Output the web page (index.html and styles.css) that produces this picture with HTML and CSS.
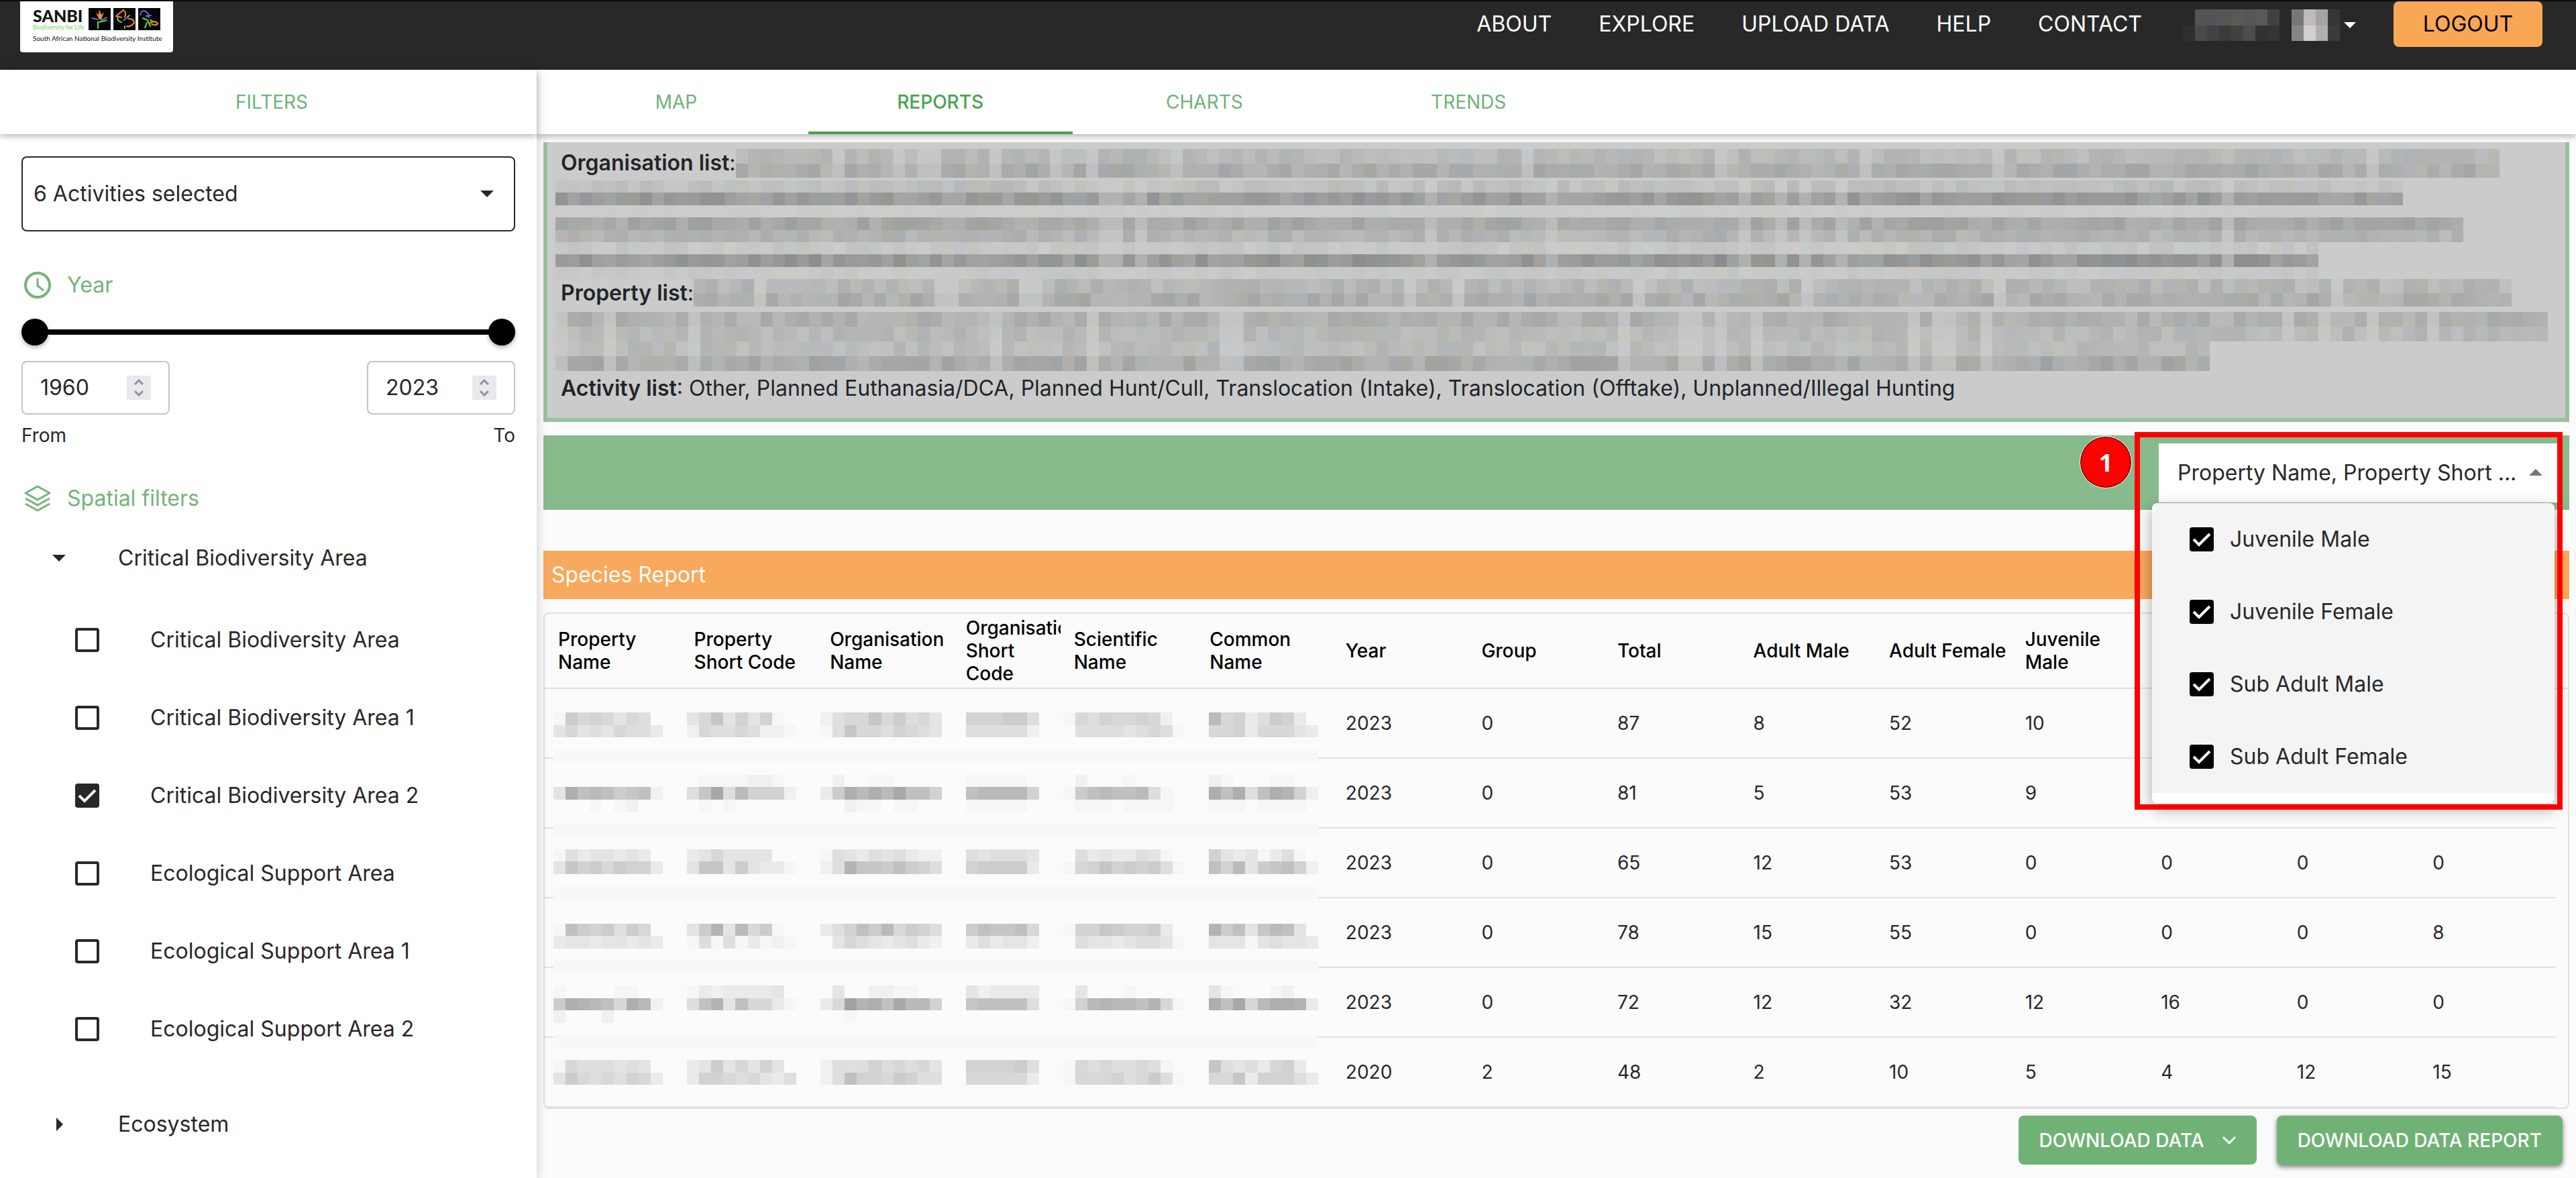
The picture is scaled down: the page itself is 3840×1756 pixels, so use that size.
FILE: index.html
```html
<!DOCTYPE html>
<html lang="en">
<head>
<meta charset="utf-8">
<meta name="viewport" content="width=device-width, initial-scale=1">
<title>SANBI - Reports</title>
<link rel="stylesheet" href="styles.css">
</head>
<body>
<header class="topbar">
  <a class="logo" href="#" aria-label="SANBI home">
    <span class="logo-row">
      <span class="logo-words">
        <span class="logo-name">SANBI</span>
        <span class="logo-tag">Biodiversity for Life</span>
      </span>
      <svg class="logo-tiles" viewBox="0 0 107 33" fill="none" stroke-linecap="round" aria-hidden="true">
        <path fill="#050608" d="M0 0h33v33H0zM37 0h33v33H37zM74 0h33v33H74z"/>
        <path fill="#f08a3c" d="M16 17 11 7l4 3 1-8 3 8 4-4-4 11z"/>
        <path stroke="#6a5bd0" stroke-width="2" d="M5 15l9 2M19 18l8-4"/>
        <path stroke="#5fd843" stroke-width="2" d="M14 30v-9l6-1 7-2"/>
        <path stroke="#f08a3c" stroke-width="2" d="M42 11l10-8q5 3 2 11M41 12l8 2M60 16q8 0 8 6-6 7-11 5"/>
        <path stroke="#7a68e0" stroke-width="2" d="M52 18l7-4"/>
        <path stroke="#5fd843" stroke-width="2" d="M43 14q0 6 6 7M54 27v3M58 13l3-2"/>
        <path stroke="#7a68e0" stroke-width="2" d="M77 10q2-8 8-5 5 3 5 9M86 12l7-1"/>
        <path stroke="#5fd843" stroke-width="2" d="M81 15l7 3 4 9M87 22l-3 7M92 18l4 2"/>
        <path stroke="#f08a3c" stroke-width="2" d="M92 22q8-4 11 1-2 4-9 1"/>
      </svg>
    </span>
    <span class="logo-full">South African National Biodiversity Institute</span>
  </a>
  <nav class="nav">
    <a href="#">ABOUT</a>
    <a href="#">EXPLORE</a>
    <a href="#">UPLOAD DATA</a>
    <a href="#">HELP</a>
    <a href="#">CONTACT</a>
  </nav>
  <button class="account" type="button" aria-label="Account menu">
    <svg width="234" height="47" viewBox="0 0 13 47" preserveAspectRatio="none" shape-rendering="crispEdges" aria-hidden="true">
      <path fill="#535456" d="M1 0h1v24H1z"/><path fill="#53545a" d="M2 0h1v24H2z"/><path fill="#555555" d="M3 0h1v24H3z"/><path fill="#5b5855" d="M4 0h1v24H4z"/><path fill="#54565a" d="M5 0h1v24H5z"/><path fill="#5a5a5a" d="M6 0h1v24H6z"/><path fill="#414141" d="M7 0h1v24H7z"/>
      <path fill="#2f2f31" d="M0 24h1v23H0z"/><path fill="#4a4a4a" d="M1 24h1v23H1z"/><path fill="#404244" d="M2 24h1v23H2z"/><path fill="#3a3a3a" d="M3 24h1v23H3z"/><path fill="#43413e" d="M4 24h1v23H4z"/><path fill="#4d4d4d" d="M5 24h1v23H5z"/><path fill="#323235" d="M6 24h1v23H6z"/><path fill="#353533" d="M7 24h1v23H7z"/>
      <path fill="#777777" d="M9 0h1v24H9z"/><path fill="#bfbbbb" d="M10 0h1v24h-1z"/><path fill="#a6a2a3" d="M11 0h1v24h-1z"/><path fill="#363636" d="M12 0h1v24h-1z"/>
      <path fill="#868686" d="M9 24h1v23H9z"/><path fill="#d0d0d0" d="M10 24h1v23h-1z"/><path fill="#b0aeb2" d="M11 24h1v23h-1z"/><path fill="#3b3b3b" d="M12 24h1v23h-1z"/>
    </svg>
    <svg width="18" height="9" viewBox="0 0 18 9" aria-hidden="true"><path fill="#fff" d="M0 0h18L9 9z"/></svg>
  </button>
  <button class="logout" type="button">LOGOUT</button>
</header>

<div class="layout">
  <aside class="sidebar">
    <h2 class="sidebar-title">FILTERS</h2>
    <div class="filters">
      <div class="activity">
        <select class="activity-select" aria-label="Activities"><option>6 Activities selected</option></select>
        <svg class="activity-caret" width="20" height="10" viewBox="0 0 20 10" aria-hidden="true"><path fill="#282828" d="M0 0h20L10 10z"/></svg>
      </div>

      <h3 class="group-title year-title">
        <svg width="40" height="40" viewBox="0 0 40 40" fill="none" stroke="#75b37a" stroke-width="4" aria-hidden="true"><circle cx="20" cy="20" r="18"/><path stroke-width="3" d="M20 10v11l9 7"/></svg>
        Year
      </h3>
      <div class="slider">
        <input type="range" min="1960" max="2023" value="1960" aria-label="Start year">
        <input type="range" min="1960" max="2023" value="2023" aria-label="End year">
      </div>
      <div class="years">
        <div class="year">
          <div class="year-box">
            <input id="year-from" type="number" value="1960">
            <svg width="36" height="36" viewBox="0 0 36 36" aria-hidden="true"><path fill="#e9e9ed" d="M0 0h36v36H0z"/><path fill="none" stroke="#8f8f9d" stroke-width="3" d="M12 13l6-6 6 6M12 23l6 6 6-6"/></svg>
          </div>
          <label for="year-from">From</label>
        </div>
        <div class="year year-end">
          <div class="year-box">
            <input id="year-to" type="number" value="2023">
            <svg width="36" height="36" viewBox="0 0 36 36" aria-hidden="true"><path fill="#e9e9ed" d="M0 0h36v36H0z"/><path fill="none" stroke="#8f8f9d" stroke-width="3" d="M12 13l6-6 6 6M12 23l6 6 6-6"/></svg>
          </div>
          <label for="year-to">To</label>
        </div>
      </div>

      <h3 class="group-title spatial-title">
        <svg width="40" height="40" viewBox="0 0 40 40" fill="none" stroke="#75b37a" stroke-width="3" stroke-linejoin="round" aria-hidden="true"><path d="M20 2l18 10-18 10L2 12zM2 20l18 10 18-10M2 28l18 10 18-10"/></svg>
        Spatial filters
      </h3>
      <button class="branch" type="button" aria-expanded="true">
        <svg width="20" height="20" viewBox="0 0 20 20" aria-hidden="true"><path fill="#282828" d="M0 5h20L10 15z"/></svg>
        Critical Biodiversity Area
      </button>
      <div class="leaves">
        <label class="leaf"><input class="tick" type="checkbox">Critical Biodiversity Area</label>
        <label class="leaf"><input class="tick" type="checkbox">Critical Biodiversity Area 1</label>
        <label class="leaf"><input class="tick" type="checkbox" checked>Critical Biodiversity Area 2</label>
        <label class="leaf"><input class="tick" type="checkbox">Ecological Support Area</label>
        <label class="leaf"><input class="tick" type="checkbox">Ecological Support Area 1</label>
        <label class="leaf"><input class="tick" type="checkbox">Ecological Support Area 2</label>
      </div>
      <button class="branch" type="button" aria-expanded="false">
        <svg width="20" height="20" viewBox="0 0 20 20" aria-hidden="true"><path fill="#282828" d="M6 0v20l10-10z"/></svg>
        Ecosystem
      </button>
    </div>
  </aside>

  <main class="main">
    <nav class="tabs">
      <a class="tab" href="#">MAP</a>
      <a class="tab active" href="#" aria-current="page">REPORTS</a>
      <a class="tab" href="#">CHARTS</a>
      <a class="tab" href="#">TRENDS</a>
    </nav>
    <div class="report">
      <section class="summary">
        <p class="summary-line"><strong>Organisation list</strong>:<svg class="mosaic fill-line" data-mosaic="organisations"></svg></p>
        <svg class="mosaic organisations-rest" data-mosaic="organisationsRest"></svg>
        <p class="summary-line property-line"><strong>Property list</strong>:<svg class="mosaic fill-line" data-mosaic="properties"></svg></p>
        <svg class="mosaic properties-rest" data-mosaic="propertiesRest"></svg>
        <p class="summary-line activity-line"><span><strong>Activity list</strong>: Other, Planned Euthanasia/DCA, Planned Hunt/Cull, Translocation (Intake), Translocation (Offtake), Unplanned/Illegal Hunting</span></p>
      </section>

      <div class="toolbar">
        <div class="columns">
          <select class="columns-select" aria-label="Columns"><option>Property Name, Property Short ...</option></select>
          <svg class="columns-caret" width="20" height="10" viewBox="0 0 20 10" aria-hidden="true"><path fill="#757575" d="M0 10h20L10 0z"/></svg>
          <div class="menu">
            <label class="menu-item"><input class="tick dark" type="checkbox" checked>Juvenile Male</label>
            <label class="menu-item"><input class="tick dark" type="checkbox" checked>Juvenile Female</label>
            <label class="menu-item"><input class="tick dark" type="checkbox" checked>Sub Adult Male</label>
            <label class="menu-item"><input class="tick dark" type="checkbox" checked>Sub Adult Female</label>
          </div>
          <div class="callout-frame"></div>
          <div class="callout-number">1</div>
        </div>
      </div>

      <h2 class="report-title">Species Report</h2>

      <div class="table-box">
        <table class="table">
          <colgroup><col span="3"><col class="col-short"><col span="11"><col class="col-end"></colgroup>
          <thead>
            <tr><th>Property Name</th><th>Property Short Code</th><th>Organisation Name</th><th>Organisation Short Code</th><th>Scientific Name</th><th>Common Name</th><th>Year</th><th>Group</th><th>Total</th><th>Adult Male</th><th>Adult Female</th><th>Juvenile Male</th><th>Juvenile Female</th><th>Sub Adult Male</th><th>Sub Adult Female</th><th></th></tr>
          </thead>
          <tbody>
            <tr><td></td><td></td><td></td><td></td><td></td><td></td><td>2023</td><td>0</td><td>87</td><td>8</td><td>52</td><td>10</td><td></td><td></td><td></td><td></td></tr>
            <tr><td></td><td></td><td></td><td></td><td></td><td></td><td>2023</td><td>0</td><td>81</td><td>5</td><td>53</td><td>9</td><td></td><td></td><td></td><td></td></tr>
            <tr><td></td><td></td><td></td><td></td><td></td><td></td><td>2023</td><td>0</td><td>65</td><td>12</td><td>53</td><td>0</td><td>0</td><td>0</td><td>0</td><td></td></tr>
            <tr><td></td><td></td><td></td><td></td><td></td><td></td><td>2023</td><td>0</td><td>78</td><td>15</td><td>55</td><td>0</td><td>0</td><td>0</td><td>8</td><td></td></tr>
            <tr><td></td><td></td><td></td><td></td><td></td><td></td><td>2023</td><td>0</td><td>72</td><td>12</td><td>32</td><td>12</td><td>16</td><td>0</td><td>0</td><td></td></tr>
            <tr><td></td><td></td><td></td><td></td><td></td><td></td><td>2020</td><td>2</td><td>48</td><td>2</td><td>10</td><td>5</td><td>4</td><td>12</td><td>15</td><td></td></tr>
          </tbody>
        </table>
        <svg class="mosaic table-mask" data-mosaic="table"></svg>
      </div>

      <div class="actions">
        <button class="download" type="button">DOWNLOAD DATA
          <svg width="20" height="14" viewBox="0 0 20 14" fill="none" stroke="#fff" stroke-width="3" aria-hidden="true"><path d="M1 2l9 9 9-9"/></svg>
        </button>
        <button class="download raised" type="button">DOWNLOAD DATA REPORT</button>
      </div>
    </div>
  </main>
</div>
<script src="mosaic.js"></script>
</body>
</html>
```

FILE: styles.css
```css
* {
  box-sizing: border-box;
}

body {
  display: flex;
  flex-direction: column;
  min-height: 100vh;
  margin: 0;
  background: #fbfbfb;
  color: #282828;
  font-family: Inter, "Liberation Sans", sans-serif;
  font-size: 32px;
  line-height: 48px;
}

h2, h3, p {
  margin: 0;
  font-size: inherit;
  font-weight: 400;
}

a {
  color: inherit;
  text-decoration: none;
}

button, select, input {
  margin: 0;
  font: inherit;
  color: inherit;
}

svg {
  display: block;
  flex: none;
}

/* Top bar */
.topbar {
  display: flex;
  align-items: flex-start;
  height: 104px;
  padding: 0 50px 0 30px;
  border-top: 2px solid #0c0c0c;
  background: #282828;
  color: #fff;
}

.logo {
  display: flex;
  flex-direction: column;
  gap: 4px;
  width: 228px;
  height: 76px;
  margin-right: auto;
  padding: 10px 19px;
  border-radius: 0 0 4px 4px;
  background: #fff;
  color: #111;
  font-family: Lato, "Open Sans", sans-serif;
  white-space: nowrap;
}

.logo-row {
  display: flex;
  justify-content: space-between;
}

.logo-words {
  display: flex;
  flex-direction: column;
  width: 80px;
}

.logo-name {
  font-size: 25px;
  font-weight: 900;
  line-height: 22px;
}

.logo-tag {
  color: #6fd85c;
  font-size: 9px;
  line-height: 13px;
}

.logo-tiles {
  width: 107px;
  height: 33px;
}

.logo-full {
  font-size: 10px;
  line-height: 12px;
}

.nav {
  display: flex;
  gap: 70px;
  margin-right: 61px;
  padding-top: 10px;
}

.account {
  display: flex;
  align-items: center;
  gap: 6px;
  margin: 12px 56px 0 0;
  padding: 0;
  border: 0;
  background: none;
}

.logout {
  width: 222px;
  height: 68px;
  border: 0;
  border-radius: 8px;
  background: #faa755;
  color: #000;
}

.layout {
  display: flex;
  flex: 1;
}

/* Filters */
.sidebar {
  position: relative;
  z-index: 1;
  flex: none;
  width: 800px;
  background: #fff;
  box-shadow: 0 4px 16px rgba(0, 0, 0, .2);
}

.sidebar-title {
  height: 96px;
  padding-left: 10px;
  box-shadow: 0 4px 8px rgba(0, 0, 0, .25);
  color: #70b276;
  font-size: 28px;
  line-height: 96px;
  text-align: center;
}

.filters {
  display: flex;
  flex-direction: column;
  padding: 33px 32px;
}

.activity {
  display: grid;
  align-items: center;
}

.activity-select, .activity-caret {
  grid-area: 1 / 1;
}

.activity-select {
  width: 100%;
  height: 112px;
  padding: 0 16px;
  border: 2px solid #282828;
  border-radius: 8px;
  background: #fff;
  appearance: none;
}

.activity-caret {
  justify-self: end;
  margin-right: 32px;
  pointer-events: none;
}

.group-title {
  display: flex;
  align-items: center;
  gap: 24px;
  height: 40px;
  padding-left: 4px;
  color: #75b37a;
}

.year-title {
  margin-top: 60px;
}

.slider {
  display: grid;
  align-items: center;
  height: 40px;
  margin-top: 30px;
  background: linear-gradient(#000, #000) center / calc(100% - 40px) 8px no-repeat;
}

.slider input {
  grid-area: 1 / 1;
  width: 100%;
  height: 40px;
  background: none;
  appearance: none;
  pointer-events: none;
}

.slider input::-webkit-slider-thumb {
  width: 40px;
  height: 40px;
  border-radius: 50%;
  background: #000;
  box-shadow: 0 3px 6px rgba(0, 0, 0, .3);
  appearance: none;
  pointer-events: auto;
}

.years {
  display: flex;
  justify-content: space-between;
  margin-top: 23px;
}

.year {
  display: flex;
  flex-direction: column;
  gap: 13px;
  width: 221px;
  font-size: 28px;
  line-height: 36px;
}

.year-end {
  text-align: right;
}

.year-box {
  display: flex;
  align-items: center;
  height: 80px;
  padding: 0 26px;
  border: 2px solid #c4c4c4;
  border-radius: 8px;
}

.year-box input {
  flex: 1;
  width: 0;
  padding: 0;
  border: 0;
  background: none;
  font-size: 32px;
  appearance: textfield;
}

.year-box input::-webkit-inner-spin-button {
  appearance: none;
}

.spatial-title {
  margin: 56px 0 37px;
}

.branch {
  display: flex;
  align-items: center;
  gap: 78px;
  height: 64px;
  padding: 0 0 0 46px;
  border: 0;
  background: none;
}

.leaves {
  display: flex;
  flex-direction: column;
  margin: 32px 0 52px;
}

.leaf {
  display: flex;
  align-items: center;
  gap: 76px;
  height: 116px;
  padding-left: 80px;
}

.tick {
  flex: none;
  width: 36px;
  height: 36px;
  border: 4px solid #282828;
  border-radius: 4px;
  background: #fff;
  appearance: none;
}

.tick:checked {
  background: #282828 url("data:image/svg+xml,%3Csvg xmlns='http://www.w3.org/2000/svg' viewBox='0 0 28 28'%3E%3Cpath d='M2 14l8 8L26 6' fill='none' stroke='%23fff' stroke-width='4'/%3E%3C/svg%3E") center / 28px no-repeat;
}

.tick.dark {
  border-color: #000;
  background-color: #000;
}

/* Report */
.main {
  flex: 1;
  min-width: 0;
}

.tabs {
  display: flex;
  height: 96px;
  padding-left: 11px;
  background: #fff;
  box-shadow: 0 4px 8px rgba(0, 0, 0, .25);
}

.tab {
  width: 13%;
  color: #70b276;
  font-size: 28px;
  line-height: 96px;
  text-align: center;
}

.tab.active {
  border-bottom: 4px solid #4ba253;
  color: #4ba253;
  font-weight: 500;
}

.report {
  padding: 12px 10px 20px;
}

.summary {
  padding: 7px 26px 20px 12px;
  border: 6px solid #98c29d;
  border-top: 0;
  background: #cbcbcb;
  color: #212529;
}

.summary-line {
  display: flex;
  align-items: center;
  height: 48px;
  padding-left: 8px;
}

.summary strong {
  font-weight: 600;
}

.mosaic {
  width: 100%;
}

.fill-line {
  flex: 1;
  width: auto;
  height: 43px;
}

.property-line {
  height: 41px;
}

.property-line .fill-line {
  height: 41px;
}

.organisations-rest {
  height: 147px;
  margin-top: 2px;
}

.properties-rest {
  height: 88px;
  margin-top: 8px;
}

.activity-line {
  margin-top: 2px;
}

.toolbar {
  display: flex;
  justify-content: flex-end;
  margin-top: 20px;
  padding: 12px 18px 11px;
  background: #87bb8c;
}

.columns {
  position: relative;
  width: 594px;
}

.columns-select {
  display: block;
  width: 100%;
  height: 88px;
  padding: 0 28px;
  border: 0;
  border-radius: 0;
  background: #fff;
  appearance: none;
}

.columns-caret {
  position: absolute;
  top: 38px;
  right: 22px;
  pointer-events: none;
}

.menu {
  position: absolute;
  z-index: 2;
  top: 89px;
  right: 4px;
  left: -10px;
  padding-bottom: 16px;
  border-radius: 8px;
  background: #fff;
  box-shadow: 0 10px 20px rgba(0, 0, 0, .2), 0 4px 24px rgba(0, 0, 0, .16);
  overflow: hidden;
}

.menu-item {
  display: flex;
  align-items: center;
  gap: 24px;
  height: 108px;
  padding-left: 56px;
  background: #f4f4f4;
}

.callout-frame {
  position: absolute;
  z-index: 3;
  top: -17px;
  right: -8px;
  left: -36px;
  height: 563px;
  border: 8px solid #f00;
  pointer-events: none;
}

.callout-number {
  position: absolute;
  z-index: 3;
  top: -11px;
  left: -118px;
  width: 78px;
  height: 78px;
  border: 1px solid #fff;
  border-radius: 50%;
  background: #f00;
  box-shadow: inset 0 0 0 1px #000;
  color: #fff;
  font-family: "Open Sans", sans-serif;
  font-size: 36px;
  font-weight: 700;
  line-height: 78px;
  text-align: center;
}

.report-title {
  margin-top: 61px;
  padding: 12px;
  background: #f8a95d;
  color: #fff;
}

.table-box {
  position: relative;
  margin-top: 20px;
  border: 2px solid #e0e0e0;
  border-radius: 8px;
}

.table {
  width: 100%;
  border-spacing: 0;
  table-layout: fixed;
  font-size: 28px;
  line-height: 34px;
}

.col-short {
  width: 161px;
}

.col-end {
  width: 19px;
}

.table th, .table td {
  padding: 0 0 0 20px;
  border-bottom: 2px solid #e0e0e0;
  text-align: left;
  vertical-align: middle;
}

.table th {
  height: 112px;
  color: #000;
  font-weight: 500;
  overflow: hidden;
}

.table td {
  height: 104px;
}

.table th:last-child, .table td:last-child {
  padding: 0;
}

.table td:last-child {
  border-bottom: 0;
}

.table-mask {
  position: absolute;
  top: 147px;
  left: 13px;
  width: 1140px;
  height: 555px;
}

.actions {
  display: flex;
  justify-content: flex-end;
  gap: 30px;
  margin-top: 10px;
  padding-right: 10px;
}

.download {
  display: flex;
  align-items: center;
  gap: 27px;
  height: 73px;
  padding: 0 31px;
  border: 0;
  border-radius: 8px;
  background: #70b276;
  color: #fff;
  font-size: 28px;
  font-weight: 500;
}

.raised {
  box-shadow: 0 4px 6px rgba(0, 0, 0, .35), 0 2px 10px rgba(0, 0, 0, .2);
}
```

FILE: mosaic.js
```js
// Draws the pixelated blocks that hide names in the report.
const SVG = "http://www.w3.org/2000/svg";

function cell(svg, x, y, w, fill) {
  const r = document.createElementNS(SVG, "rect");
  r.setAttribute("x", x);
  r.setAttribute("y", y);
  r.setAttribute("width", w);
  r.setAttribute("height", 1);
  r.setAttribute("fill", fill);
  svg.appendChild(r);
}

function prepare(svg, cols, rows) {
  svg.setAttribute("viewBox", `0 0 ${cols} ${rows}`);
  svg.setAttribute("preserveAspectRatio", "none");
  svg.setAttribute("shape-rendering", "crispEdges");
  svg.setAttribute("aria-hidden", "true");
}

let seed = 7;
function random() {
  seed = (seed * 1103515245 + 12345) % 2147483648;
  return seed / 2147483648;
}

// Each row: [cells filled, mean grey, spread]
const lists = {
  organisations: { cols: 150, rows: [[146, 184, 7], [146, 173, 9]] },
  organisationsRest: {
    cols: 165,
    rows: [[153, 191, 7], [153, 155, 11], [140, 203, 1], [158, 168, 9],
      [158, 179, 8], [146, 198, 5], [146, 152, 12], [146, 199, 3]]
  },
  properties: { cols: 154, rows: [[151, 182, 9], [151, 174, 10]] },
  propertiesRest: { cols: 165, rows: [[165, 176, 9], [165, 184, 7], [137, 186, 7], [137, 170, 10]] }
};

function drawList(svg, list) {
  prepare(svg, list.cols, list.rows.length);
  // Word gaps line up down the rows of one block
  const gaps = Array.from({ length: list.cols }, () => random() < 0.08);
  list.rows.forEach(([count, mean, spread], y) => {
    for (let x = 0; x < count; x++) {
      const grey = gaps[x] ? Math.min(201, mean + spread * 2) : mean + (random() * 2 - 1) * spread;
      const tint = (random() * 2 - 1) * Math.min(spread, 3);
      cell(svg, x, y, 1, `rgb(${Math.round(grey + tint)},${Math.round(grey + 1)},${Math.round(grey - tint)})`);
    }
  });
}

// Darkness per cell in hex digits, one string per masked column
const offsets = [0, 11, 22, 34, 42, 54];
const tableRows = {
  0: ["186764650", "469474710", "2566968564", "777885", "1657667620", "b67358730"],
  1: ["464546553", "265565221", "1596657654", "555552", "0555545651", "667366643"],
  5: ["000000000", "011112210", "0200110000", "111110", "0200010000", "210001100"],
  6: ["4daba89a2", "59e5b7772", "38dbdbeaa7", "abbbb7", "18abaab510", "dad5adc72"],
  7: ["000101200", "010100000", "0021101100", "111110", "0111011110", "111011110"],
  11: ["153443430", "346444400", "1543545322", "545554", "0534335410", "743413510"],
  12: ["497868773", "499484331", "25c998a875", "788883", "1679787851", "a7b489a72"],
  17: ["1a8785860", "48c4b6810", "357a8b6875", "8a99a6", "1779877830", "c8a49ba40"],
  18: ["344344343", "151513121", "0465434532", "353442", "0544345541", "444145443"],
  22: ["100001100", "132333340", "0400221100", "423333", "0400010000", "410001200"],
  23: ["8dcba6db2", "5ac4a6631", "36fcdaebb7", "9aaaa5", "17bcbbac61", "dae6bddc3"],
  24: ["200020000", "000000000", "0010000000", "000000", "0000000000", "000000000"],
  28: ["165554540", "348464740", "2555756564", "777785", "1656556510", "954536730"],
  29: ["486565763", "377656435", "25a7768755", "666663", "1666756851", "669377753"]
};

function drawTable(svg) {
  prepare(svg, 63, 30);
  for (let y = 0; y < 30; y++) {
    const band = [3, 9, 14, 20, 26].includes(y);
    cell(svg, 0, y, 63, band ? "#f8f8f8" : "#fbfbfb");
  }
  for (const [y, groups] of Object.entries(tableRows)) {
    groups.forEach((group, i) => {
      [...group].forEach((digit, x) => {
        const level = parseInt(digit, 16);
        if (level) {
          const grey = 252 - 6 * level;
          cell(svg, offsets[i] + x, y, 1, `rgb(${grey},${grey},${grey})`);
        }
      });
    });
  }
}

document.querySelectorAll("[data-mosaic]").forEach((svg) => {
  const name = svg.dataset.mosaic;
  if (name === "table") drawTable(svg);
  else drawList(svg, lists[name]);
});
```
